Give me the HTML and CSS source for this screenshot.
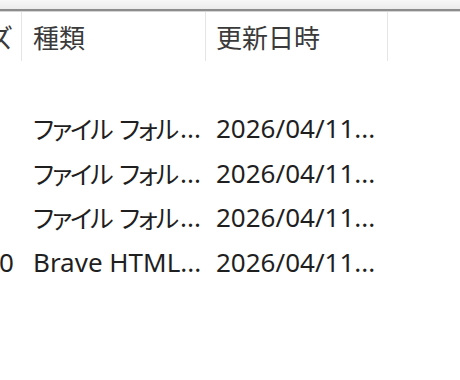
FILE: index.html
```html
<!DOCTYPE html>
<html lang="ja">
<head>
<meta charset="utf-8">
<link rel="stylesheet" href="styles.css">
</head>
<body>
<div class="topbar"></div>
<div class="header">
  <div class="col c1 hcell"><span>サイズ</span></div>
  <div class="col c2 hcell">種類</div>
  <div class="col c3 hcell">更新日時</div>
  <div class="col c4 hcell"></div>
</div>
<div class="rows">
  <div class="row">
    <div class="col c1"></div>
    <div class="col c2"><span class="kana">ファイル フォル</span>...</div>
    <div class="col c3">2026/04/11...</div>
  </div>
  <div class="row">
    <div class="col c1"></div>
    <div class="col c2"><span class="kana">ファイル フォル</span>...</div>
    <div class="col c3">2026/04/11...</div>
  </div>
  <div class="row">
    <div class="col c1"></div>
    <div class="col c2"><span class="kana">ファイル フォル</span>...</div>
    <div class="col c3">2026/04/11...</div>
  </div>
  <div class="row">
    <div class="col c1"><span>10</span></div>
    <div class="col c2">Brave HTML...</div>
    <div class="col c3">2026/04/11...</div>
  </div>
</div>
</body>
</html>
```

FILE: styles.css
```css
html, body {
  margin: 0;
  padding: 0;
  background: #ffffff;
  width: 460px;
  height: 380px;
  overflow: hidden;
  font-family: "Noto Sans", "Noto Sans CJK JP", sans-serif;
  font-size: 26px;
  color: #1f1f1f;
}

.topbar {
  height: 9px;
  background: linear-gradient(#f7f7f7, #ececec);
  border-bottom: 2px solid #8c8c8c;
  box-shadow: 0 1px 0 #d4d4d4;
}

.header {
  display: flex;
  height: 49px;
  margin-top: 1px;
}

.row {
  display: flex;
  height: 44.6px;
  align-items: center;
}

.rows {
  padding-top: 45px;
}

.col {
  display: flex;
  align-items: center;
  white-space: nowrap;
  overflow: hidden;
  box-sizing: border-box;
}

.hcell {
  border-right: 1px solid #e5e5e5;
  color: #3a3a3a;
}

.kana {
  font-family: "Noto Sans CJK JP", sans-serif;
  font-size: 25px;
  font-feature-settings: "palt";
  letter-spacing: -2px;
  word-spacing: 4px;
  margin-right: 3px;
}

.c1 {
  width: 22px;
  justify-content: flex-end;
  padding-right: 8px;
}

.c2 {
  width: 184px;
  padding-left: 11px;
}

.c3 {
  width: 182px;
  padding-left: 10px;
}

.c4 {
  width: 72px;
  border-right: none;
}
```
